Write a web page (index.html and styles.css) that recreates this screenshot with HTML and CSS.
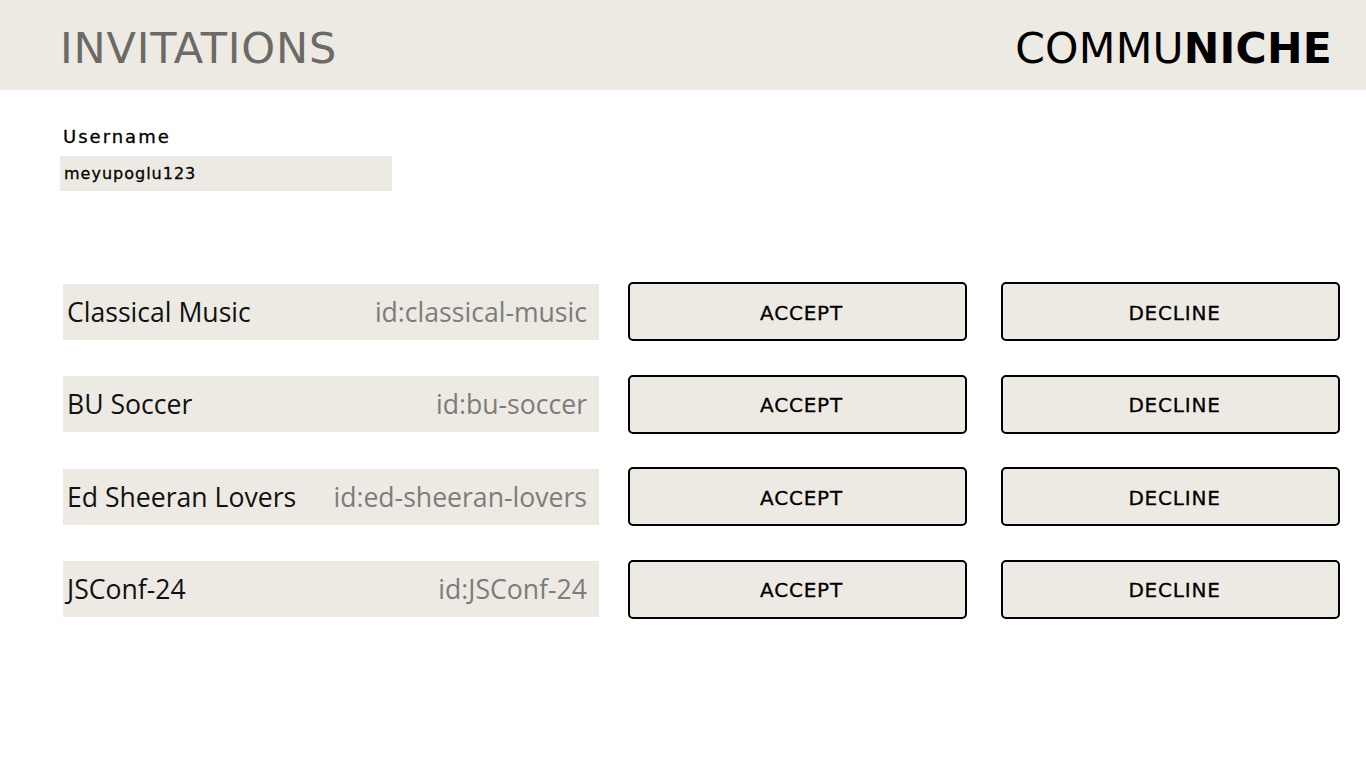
FILE: index.html
```html
<!DOCTYPE html>
<html>
<head>
<meta charset="utf-8">
<link rel="stylesheet" href="styles.css">
</head>
<body>
<header class="topbar">
  <h1 class="title">INVITATIONS</h1>
  <div class="logo">COMMU<b>NICHE</b></div>
</header>
<main class="content">
  <section class="user">
    <label class="user-label">Username</label>
    <div class="user-field">meyupoglu123</div>
  </section>
  <section class="list">
    <div class="row">
      <div class="name"><span class="n">Classical Music</span><span class="id">id:classical-music</span></div>
      <button class="btn accept">ACCEPT</button>
      <button class="btn decline">DECLINE</button>
    </div>
    <div class="row">
      <div class="name"><span class="n">BU Soccer</span><span class="id">id:bu-soccer</span></div>
      <button class="btn accept">ACCEPT</button>
      <button class="btn decline">DECLINE</button>
    </div>
    <div class="row">
      <div class="name"><span class="n">Ed Sheeran Lovers</span><span class="id">id:ed-sheeran-lovers</span></div>
      <button class="btn accept">ACCEPT</button>
      <button class="btn decline">DECLINE</button>
    </div>
    <div class="row">
      <div class="name"><span class="n">JSConf-24</span><span class="id">id:JSConf-24</span></div>
      <button class="btn accept">ACCEPT</button>
      <button class="btn decline">DECLINE</button>
    </div>
  </section>
</main>
</body>
</html>
```
FILE: styles.css
```css
* { box-sizing: border-box; }
html, body { margin: 0; padding: 0; background: #fff; }
body { font-family: "DejaVu Sans", sans-serif; color: #000; }

.topbar {
  height: 90px;
  background: #edeae4;
  display: flex;
  align-items: center;
  justify-content: space-between;
  padding: 6px 34px 0 60px;
}
.title {
  margin: 0;
  font-weight: normal;
  font-size: 43px;
  color: #6b6a66;
  letter-spacing: 0.8px;
}
.logo {
  font-size: 42.5px;
  color: #000;
  letter-spacing: 0.2px;
}
.logo b { font-weight: bold; }

.content { padding: 35px 0 0 60px; }

.user { display: flex; flex-direction: column; }
.user-label {
  font-size: 18px;
  letter-spacing: 2px;
  padding-left: 3px;
  height: 22px;
  line-height: 23px;
  -webkit-text-stroke: 0.3px #000;
}
.user-field {
  margin-top: 9px;
  width: 332px;
  height: 35px;
  background: #edeae4;
  font-size: 16px;
  letter-spacing: 1px;
  line-height: 36px;
  padding-left: 4px;
  -webkit-text-stroke: 0.3px #000;
}

.list {
  margin-top: 91px;
  padding-left: 3px;
  display: flex;
  flex-direction: column;
  gap: 33.6px;
}
.row { display: flex; align-items: center; height: 59px; }
.name {
  width: 536px;
  height: 56px;
  background: #edeae4;
  display: flex;
  align-items: center;
  justify-content: space-between;
  padding: 0 12px 0 4px;
  font-family: "Open Sans", sans-serif;
  font-size: 26.6px;
}
.name .n { color: #111; }
.name .id { color: #7d7c79; }
.btn {
  width: 339px;
  height: 59px;
  background: #edeae4;
  border: 2px solid #000;
  border-radius: 5px;
  font-family: "DejaVu Sans", sans-serif;
  font-size: 20px;
  letter-spacing: 0.8px;
  color: #000;
  padding: 2px 0 0 8px;
  -webkit-text-stroke: 0.3px #000;
}
.accept { margin-left: 29px; }
.decline { margin-left: 34px; }
```
